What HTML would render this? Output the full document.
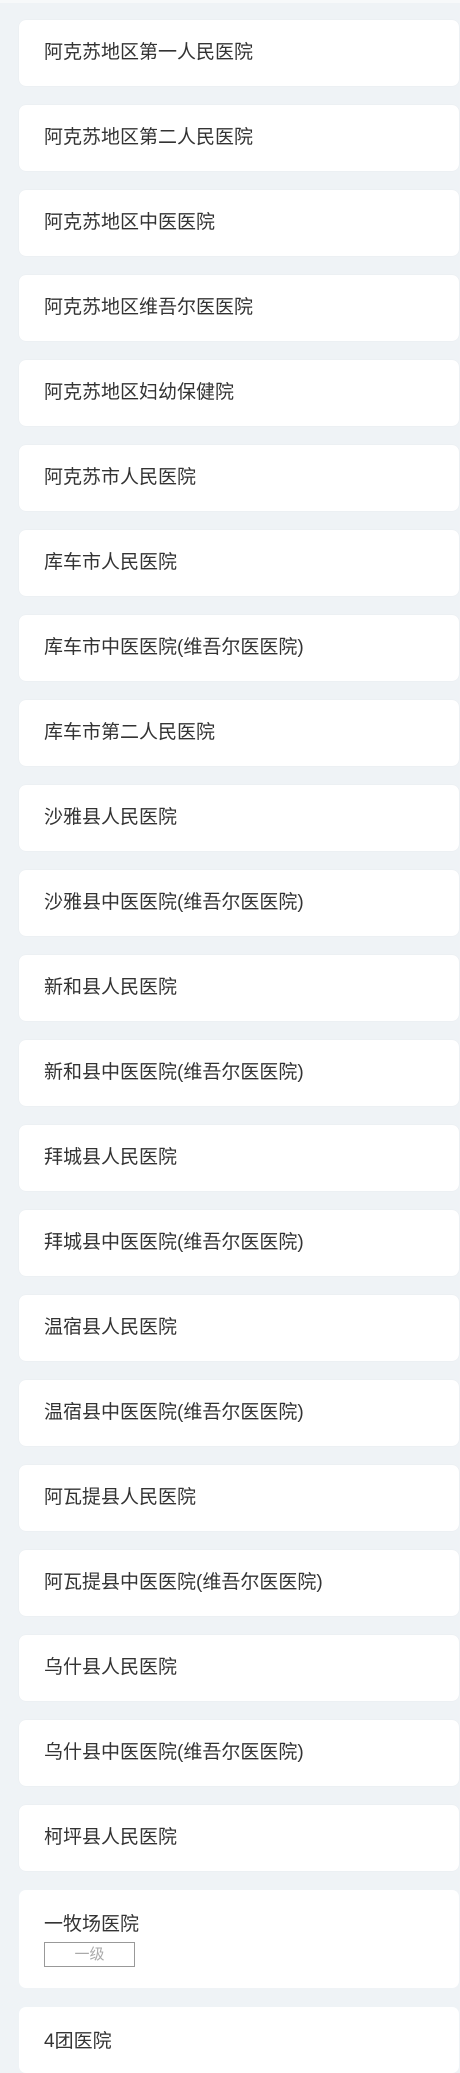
<!DOCTYPE html>
<html><head><meta charset="utf-8"><style>
html,body{margin:0;padding:0}
body{width:460px;height:2048px;overflow:hidden;background:#eff3f6;font-family:"Liberation Sans","Noto Sans CJK SC",sans-serif;position:relative}
.top{position:absolute;left:0;top:0;width:460px;height:3px;background:#f7f9fa}
.c{position:absolute;left:19px;width:440px;height:66px;background:#fff;border-radius:7px;box-shadow:0 0 1px rgba(0,0,0,.08);box-sizing:border-box;padding-left:25px;font-size:19px;color:#333;line-height:66px}
.b{position:absolute;left:19px;width:440px;background:#fff;border-radius:7px;box-sizing:border-box;padding-left:25px;font-size:19px;color:#333}
.tag{display:block;width:91px;height:25px;box-sizing:border-box;border:1px solid #999;font-size:15px;color:#aaa;text-align:center;line-height:23px;margin-top:4px}
</style></head><body>
<div class="top"></div>
<div class="c" style="top:20px">阿克苏地区第一人民医院</div>
<div class="c" style="top:105px">阿克苏地区第二人民医院</div>
<div class="c" style="top:190px">阿克苏地区中医医院</div>
<div class="c" style="top:275px">阿克苏地区维吾尔医医院</div>
<div class="c" style="top:360px">阿克苏地区妇幼保健院</div>
<div class="c" style="top:445px">阿克苏市人民医院</div>
<div class="c" style="top:530px">库车市人民医院</div>
<div class="c" style="top:615px">库车市中医医院(维吾尔医医院)</div>
<div class="c" style="top:700px">库车市第二人民医院</div>
<div class="c" style="top:785px">沙雅县人民医院</div>
<div class="c" style="top:870px">沙雅县中医医院(维吾尔医医院)</div>
<div class="c" style="top:955px">新和县人民医院</div>
<div class="c" style="top:1040px">新和县中医医院(维吾尔医医院)</div>
<div class="c" style="top:1125px">拜城县人民医院</div>
<div class="c" style="top:1210px">拜城县中医医院(维吾尔医医院)</div>
<div class="c" style="top:1295px">温宿县人民医院</div>
<div class="c" style="top:1380px">温宿县中医医院(维吾尔医医院)</div>
<div class="c" style="top:1465px">阿瓦提县人民医院</div>
<div class="c" style="top:1550px">阿瓦提县中医医院(维吾尔医医院)</div>
<div class="c" style="top:1635px">乌什县人民医院</div>
<div class="c" style="top:1720px">乌什县中医医院(维吾尔医医院)</div>
<div class="c" style="top:1805px">柯坪县人民医院</div>
<div class="b" style="top:1890px;height:98px;padding-top:22px;line-height:26px">一牧场医院<span class="tag">一级</span></div>
<div class="b" style="top:2007px;height:66px;padding-top:22px;line-height:26px">4团医院</div>
</body></html>
